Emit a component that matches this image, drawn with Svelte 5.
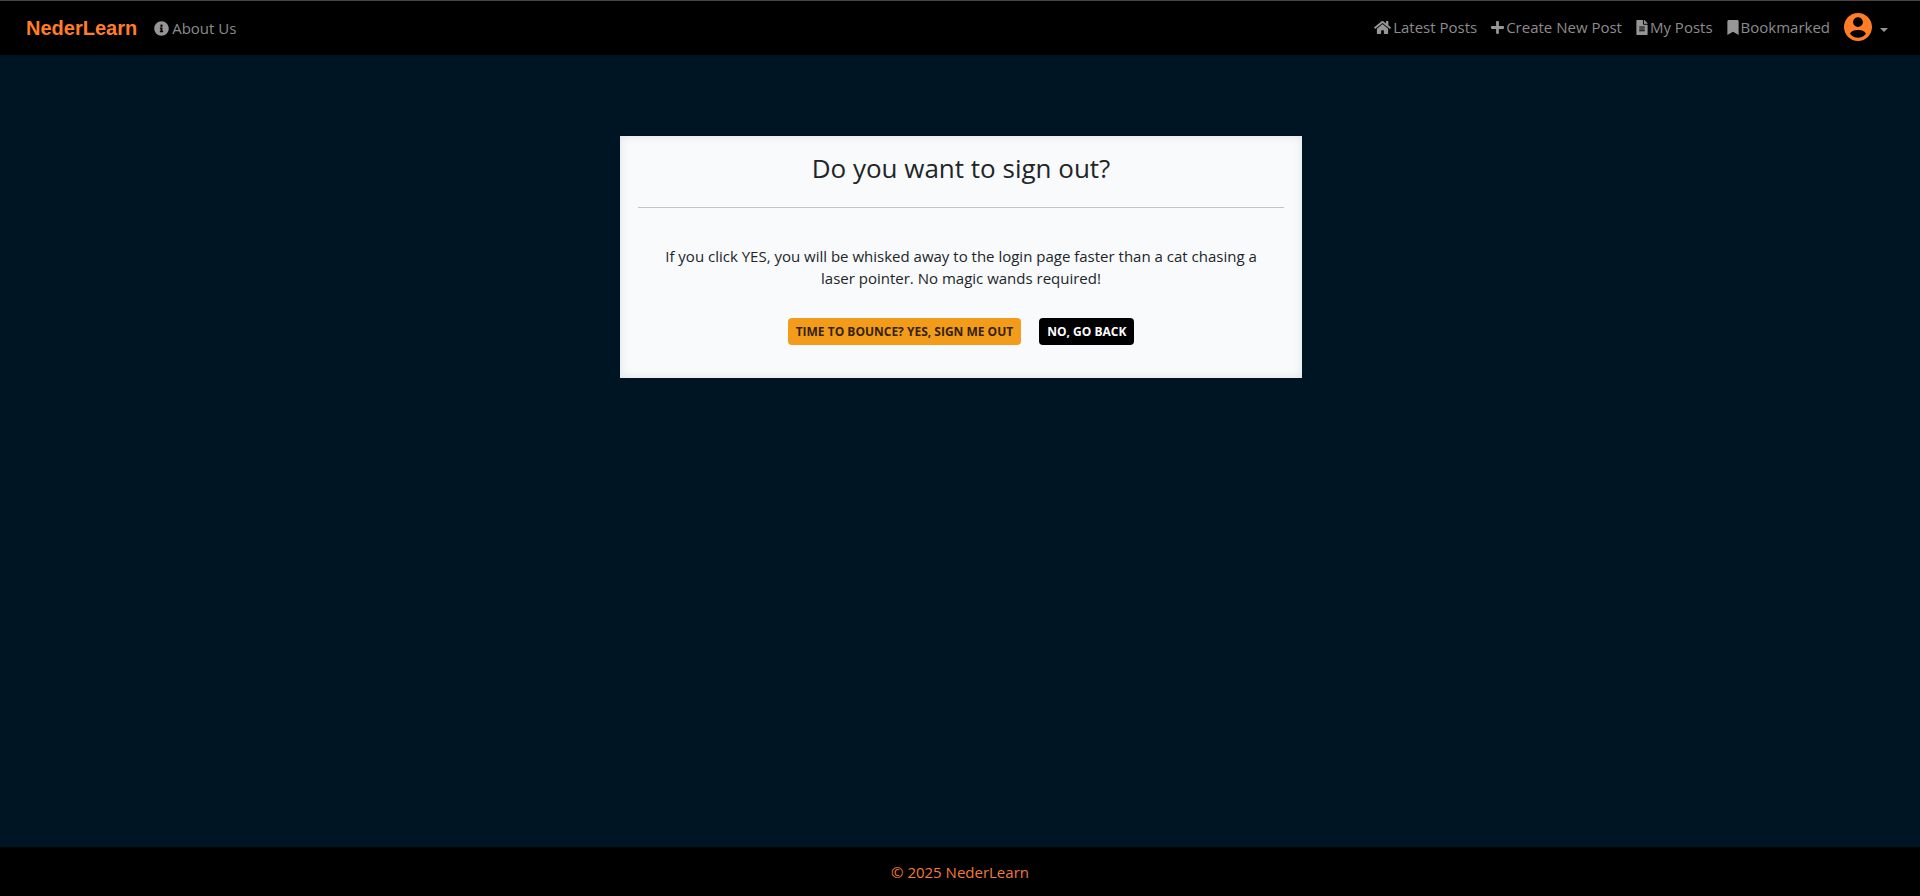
<script>
  const icons = {
    info: {
      box: '0 0 512 512',
      width: 15,
      d: 'M256 8C119.043 8 8 119.083 8 256c0 136.997 111.043 248 248 248s248-111.003 248-248C504 119.083 392.957 8 256 8zm0 110c23.196 0 42 18.804 42 42s-18.804 42-42 42-42-18.804-42-42 18.804-42 42-42zm56 254c0 6.627-5.373 12-12 12h-88c-6.627 0-12-5.373-12-12v-24c0-6.627 5.373-12 12-12h12v-64h-12c-6.627 0-12-5.373-12-12v-24c0-6.627 5.373-12 12-12h64c6.627 0 12 5.373 12 12v100h12c6.627 0 12 5.373 12 12v24z'
    },
    home: {
      box: '0 0 576 512',
      width: 17,
      d: 'M280.37 148.26L96 300.11V464a16 16 0 0 0 16 16l112.06-.29a16 16 0 0 0 15.92-16V368a16 16 0 0 1 16-16h64a16 16 0 0 1 16 16v95.64a16 16 0 0 0 16 16.05L464 480a16 16 0 0 0 16-16V300L295.67 148.26a12.19 12.19 0 0 0-15.3 0zM571.6 251.47L488 182.56V44.05a12 12 0 0 0-12-12h-56a12 12 0 0 0-12 12v72.61L318.47 43a48 48 0 0 0-61 0L4.34 251.47a12 12 0 0 0-1.6 16.9l25.5 31A12 12 0 0 0 45.15 301l235.22-193.74a12.19 12.19 0 0 1 15.3 0L530.9 301a12 12 0 0 0 16.9-1.6l25.5-31a12 12 0 0 0-1.7-16.93z'
    },
    plus: {
      box: '0 0 448 512',
      width: 13,
      d: 'M416 208H272V64c0-17.67-14.33-32-32-32h-32c-17.67 0-32 14.33-32 32v144H32c-17.67 0-32 14.33-32 32v32c0 17.67 14.33 32 32 32h144v144c0 17.67 14.33 32 32 32h32c17.67 0 32-14.33 32-32V304h144c17.67 0 32-14.33 32-32v-32c0-17.67-14.33-32-32-32z'
    },
    file: {
      box: '0 0 384 512',
      width: 12,
      d: 'M224 136V0H24C10.7 0 0 10.7 0 24v464c0 13.3 10.7 24 24 24h336c13.3 0 24-10.7 24-24V160H248c-13.2 0-24-10.8-24-24zm64 236c0 6.6-5.4 12-12 12H108c-6.6 0-12-5.4-12-12v-8c0-6.6 5.4-12 12-12h168c6.6 0 12 5.4 12 12v8zm0-64c0 6.6-5.4 12-12 12H108c-6.6 0-12-5.4-12-12v-8c0-6.6 5.4-12 12-12h168c6.6 0 12 5.4 12 12v8zm0-72v8c0 6.6-5.4 12-12 12H108c-6.6 0-12-5.4-12-12v-8c0-6.6 5.4-12 12-12h168c6.6 0 12 5.4 12 12zm96-114.1v6.1H256V0h6.1c6.4 0 12.5 2.5 17 7l97.9 98c4.5 4.5 7 10.6 7 16.9z'
    },
    bookmark: {
      box: '0 0 384 512',
      width: 12,
      d: 'M0 512V48C0 21.49 21.49 0 48 0h288c26.51 0 48 21.49 48 48v464L192 400 0 512z'
    }
  };

  const links = [
    { label: 'Latest Posts', icon: icons.home },
    { label: 'Create New Post', icon: icons.plus },
    { label: 'My Posts', icon: icons.file },
    { label: 'Bookmarked', icon: icons.bookmark }
  ];
</script>

{#snippet navLink(label, icon)}
  <a class="link" href="#top">
    <svg class="icon" viewBox={icon.box} width={icon.width} height="15" aria-hidden="true"><path d={icon.d} /></svg>
    <span>{label}</span>
  </a>
{/snippet}

<div class="page" id="top">
  <header>
    <nav class="group site" aria-label="Site">
      <a class="brand" href="#top">NederLearn</a>
      {@render navLink('About Us', icons.info)}
    </nav>
    <nav class="group account" aria-label="Posts">
      {#each links as item}
        {@render navLink(item.label, item.icon)}
      {/each}
      <button class="profile" type="button" aria-label="Account menu">
        <svg viewBox="2 2 20 20" width="28" height="28" aria-hidden="true">
          <path d="M12 2C6.48 2 2 6.48 2 12s4.480 10 10 10 10-4.480 10-10S17.520 2 12 2zm0 3c1.930 0 3.500 1.570 3.500 3.500s-1.570 3.500-3.500 3.500-3.500-1.570-3.500-3.500 1.570-3.500 3.500-3.500zm0 14.600c-2.300 0-4.200-.9-5.600-2.600C6.700 14.900 9.300 14.100 12 14.100s5.300.8 5.600 2.900C16.200 18.700 14.300 19.600 12 19.600z" />
        </svg>
        <span class="caret"></span>
      </button>
    </nav>
  </header>

  <main>
    <section class="card" aria-labelledby="title">
      <h1 id="title">Do you want to sign out?</h1>
      <hr />
      <p>If you click YES, you will be whisked away to the login page faster than a cat chasing a laser pointer. No magic wands required!</p>
      <div class="actions">
        <button class="btn yes" type="submit">Time to bounce? Yes, sign me out</button>
        <button class="btn no" type="button">No, go back</button>
      </div>
    </section>
  </main>

  <footer>© 2025 NederLearn</footer>
</div>

<style>
  :global(body) {
    margin: 0;
    background: #001524;
  }

  .page {
    display: flex;
    flex-direction: column;
    min-height: 100vh;
    box-sizing: border-box;
    border-top: 1px solid #454545;
    font-family: 'Open Sans', sans-serif;
    font-size: 15px;
    line-height: 22px;
    color: #212529;
  }

  header {
    display: flex;
    justify-content: space-between;
    align-items: center;
    box-sizing: border-box;
    min-height: 54px;
    padding: 0 32px 0 26px;
    background: #000;
  }

  .group {
    display: flex;
    align-items: center;
    gap: 14px;
  }

  .site {
    gap: 17px;
  }

  .account {
    padding-bottom: 2px;
  }

  .brand {
    color: #ff7d26;
    font-family: 'Liberation Sans', Arial, sans-serif;
    font-size: 20px;
    font-weight: 700;
    text-decoration: none;
  }

  .link {
    display: flex;
    align-items: center;
    gap: 3px;
    color: #8c8c8c;
    text-decoration: none;
    white-space: nowrap;
  }

  .account .link {
    gap: 2px;
  }

  .icon {
    fill: #969696;
  }

  .profile {
    display: flex;
    align-items: center;
    gap: 8px;
    padding: 0;
    border: 0;
    background: none;
  }

  .profile svg {
    fill: #ff7d26;
  }

  .caret {
    margin-top: 5px;
    border-top: 4px solid #969696;
    border-left: 4px solid transparent;
    border-right: 4px solid transparent;
  }

  main {
    flex: 1;
    padding: 81px 16px 32px 18px;
  }

  .card {
    box-sizing: border-box;
    width: 100%;
    max-width: 682px;
    margin: 0 auto;
    padding: 16px 18px 33px;
    background: #f8fafb;
    box-shadow: inset 0 0 10px rgba(0, 0, 0, 0.1);
    text-align: center;
  }

  h1 {
    margin: 0;
    font-size: 26px;
    font-weight: 400;
    line-height: 32px;
  }

  hr {
    margin: 23px 0 37px;
    border: 0;
    border-top: 1px solid #c1c3c7;
  }

  p {
    margin: 0 auto 29px;
    padding: 0 24px;
  }

  .actions {
    display: flex;
    flex-wrap: wrap;
    justify-content: center;
    gap: 18px;
  }

  .btn {
    padding: 5px 8px 4px;
    border: 0;
    border-radius: 4px;
    font-family: inherit;
    font-size: 12px;
    font-weight: 700;
    line-height: 18px;
    text-transform: uppercase;
  }

  .yes {
    background: #f39c1b;
    color: #33230b;
  }

  .no {
    background: #000;
    color: #fff;
  }

  footer {
    padding: 14px 16px 13px;
    background: #000;
    color: #f37a3c;
    text-align: center;
  }
</style>
